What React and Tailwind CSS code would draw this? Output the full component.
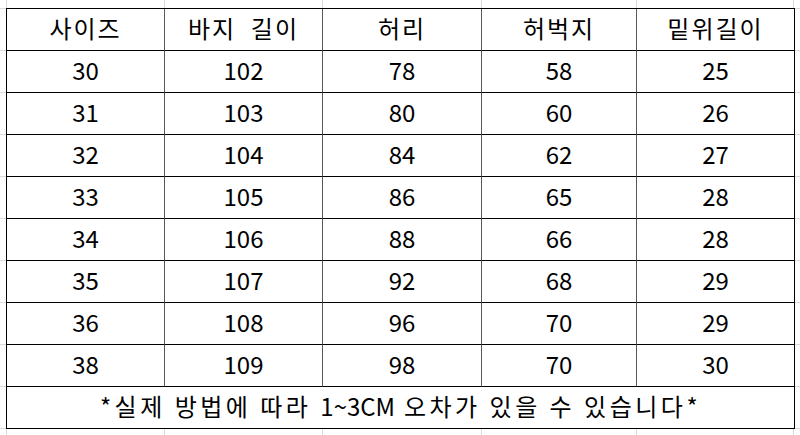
import React from 'react';

const cols = ['w-[158px]', 'w-[158px]', 'w-[159px]', 'w-[155px]', 'w-[158px]'];

const header = ['사이즈', '바지  길이', '허리', '허벅지', '밑위길이'];

const rows = [
  ['30', '102', '78', '58', '25'],
  ['31', '103', '80', '60', '26'],
  ['32', '104', '84', '62', '27'],
  ['33', '105', '86', '65', '28'],
  ['34', '106', '88', '66', '28'],
  ['35', '107', '92', '68', '29'],
  ['36', '108', '96', '70', '29'],
  ['38', '109', '98', '70', '30'],
];

const GridStrip = ({ height }) => (
  <div className={`flex pl-[6px] ${height}`}>
    {cols.map((w, i) => (
      <div key={i} className={`${w} shrink-0 border-l border-[#dadada] ${i === cols.length - 1 ? 'border-r' : ''}`} />
    ))}
  </div>
);

const Cell = ({ children, i }) => (
  <div
    className={`${cols[i]} shrink-0 h-[42px] pb-[4px] flex items-center justify-center border-b border-black border-r ${
      i === cols.length - 1 ? 'border-r-black' : 'border-r-[#5a5a5a]'
    }`}
  >
    <span className="whitespace-pre">{children}</span>
  </div>
);

export default function App() {
  return (
    <div
      className="w-[800px] h-[435px] bg-white overflow-hidden text-black"
      style={{ fontFamily: '"Noto Sans CJK KR", "Noto Sans", sans-serif' }}
    >
      <GridStrip height="h-[8px]" />
      <div className="flex">
        <div className="w-[6px] shrink-0 bg-[repeating-linear-gradient(to_bottom,#dadada_0px,#dadada_1px,transparent_1px,transparent_42px)]" />
        <div className="border-l border-t border-black text-[24px] leading-none">
          <div className="flex">
            {header.map((h, i) => (
              <Cell key={i} i={i}>
                <span className="tracking-[2px]">{h}</span>
              </Cell>
            ))}
          </div>
          {rows.map((r, ri) => (
            <div key={ri} className="flex">
              {r.map((v, i) => (
                <Cell key={i} i={i}>
                  {v}
                </Cell>
              ))}
            </div>
          ))}
          <div className="w-[788px] h-[42px] pb-[4px] flex items-center justify-center border-b border-r border-black">
            <span className="whitespace-pre tracking-[3.5px]">
              *실제 방법에 따라 <span className="tracking-normal">1~3CM</span> 오차가 있을 수 있습니다*
            </span>
          </div>
        </div>
        <div className="w-[6px] shrink-0 bg-[repeating-linear-gradient(to_bottom,#dadada_0px,#dadada_1px,transparent_1px,transparent_42px)]" />
      </div>
      <GridStrip height="h-[6px]" />
    </div>
  );
}
